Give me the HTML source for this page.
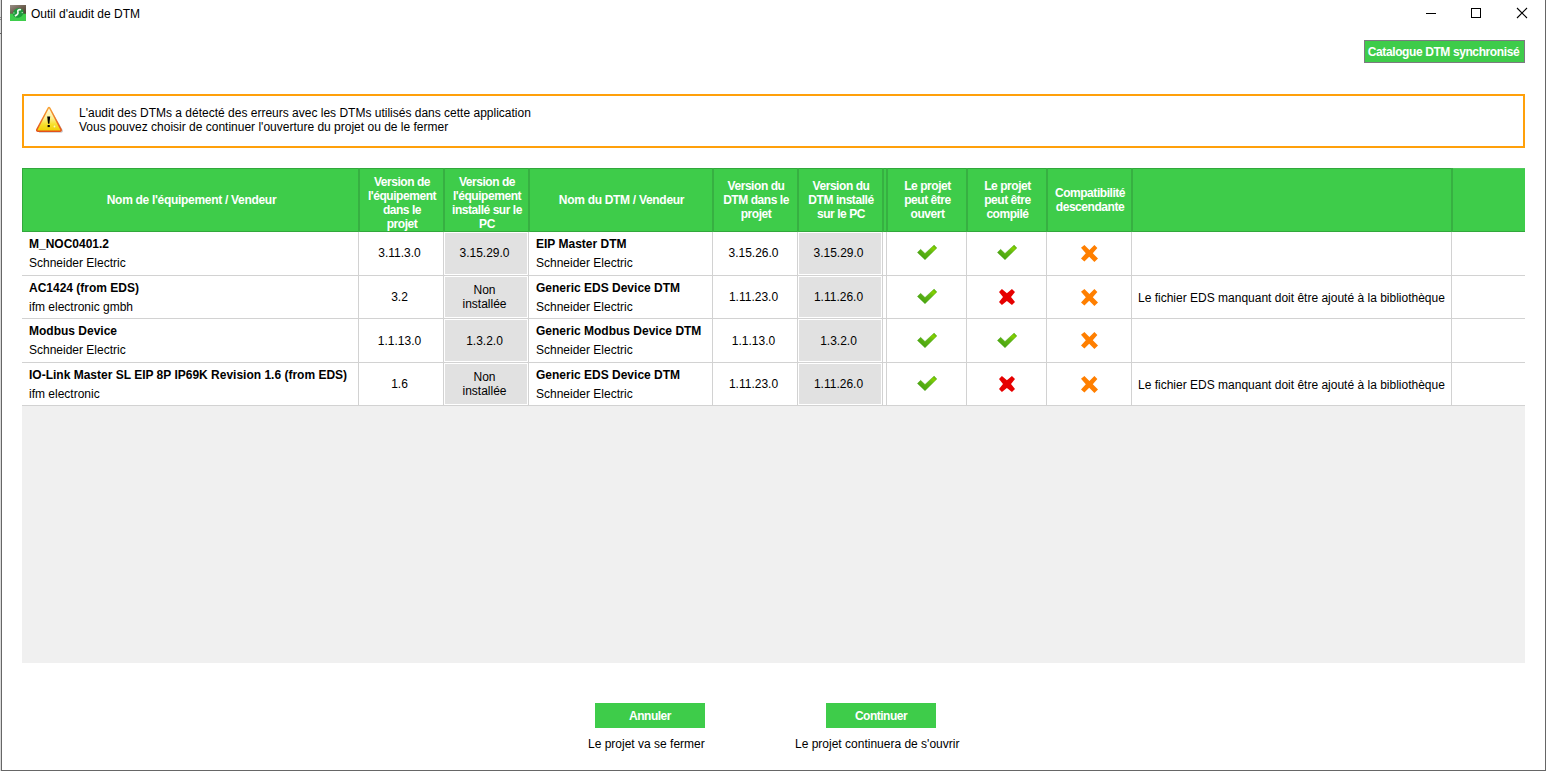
<!DOCTYPE html>
<html><head><meta charset="utf-8">
<style>
*{box-sizing:border-box;margin:0;padding:0}
html,body{width:1546px;height:771px;overflow:hidden;background:#fff}
body{position:relative;font-family:"Liberation Sans",sans-serif;font-size:12px;color:#000}
.a{position:absolute}
.hd{position:absolute;color:#fff;font-weight:bold;font-size:12px;letter-spacing:-0.45px;line-height:14px;text-align:center;white-space:nowrap}
.c{position:absolute;text-align:center;line-height:14px;white-space:nowrap}
.t{position:absolute;white-space:nowrap;line-height:14px}
</style></head><body>

<div class="a" style="left:0;top:0;width:1px;height:771px;background:#d9d9d9"></div>
<div class="a" style="left:1px;top:0;width:1px;height:771px;background:#666"></div>
<div class="a" style="left:0;top:17px;width:1px;height:1px;background:#8a8a8a"></div>
<div class="a" style="left:0;top:19px;width:1px;height:1px;background:#8a8a8a"></div>
<div class="a" style="left:0;top:33px;width:1px;height:1px;background:#606060"></div>
<div class="a" style="left:1545px;top:0;width:1px;height:771px;background:#666"></div>
<div class="a" style="left:1px;top:770px;width:1545px;height:1px;background:#666"></div>
<svg class="a" style="left:10px;top:5px" width="16" height="16" viewBox="0 0 16 16">
<defs><linearGradient id="ph" x1="0" y1="0" x2="1" y2="1"><stop offset="0" stop-color="#9a9088"/><stop offset="0.5" stop-color="#6e6050"/><stop offset="1" stop-color="#4a3c30"/></linearGradient></defs>
<rect x="0" y="0" width="16" height="9" fill="url(#ph)"/>
<rect x="0" y="8.7" width="16" height="7.3" fill="#3ecd4c"/>
<ellipse cx="8.2" cy="8" rx="5.6" ry="4.6" transform="rotate(-25 8.2 8)" fill="#1e9a3c"/>
<path d="M11 4.8 C9 4.2 7.2 5.2 7.9 7 C8.4 8.4 7.2 10.2 4.8 10.9" stroke="#eef8ee" stroke-width="1.7" fill="none"/>
<path d="M3.2 8 L4.6 8 M11.6 7.6 L13 7.6" stroke="#cfe8cf" stroke-width="0.8"/>
</svg>
<div class="a" style="left:31px;top:6px;font-size:12px;line-height:16px;white-space:nowrap">Outil d'audit de DTM</div>
<div class="a" style="left:1426px;top:13px;width:10px;height:1px;background:#000"></div>
<div class="a" style="left:1471px;top:8px;width:10px;height:10px;border:1px solid #000"></div>
<svg class="a" style="left:1516px;top:7px" width="12" height="12" viewBox="0 0 12 12"><path d="M1 1L11 11M11 1L1 11" stroke="#000" stroke-width="1.1"/></svg>
<div class="a" style="left:1364px;top:40px;width:161px;height:23px;background:#3ecc4a;border:1px solid #7c7a80;color:#fff;font-weight:bold;font-size:12px;line-height:23px;padding-right:2px;text-align:center;white-space:nowrap;letter-spacing:-0.4px">Catalogue DTM synchronisé</div>
<div class="a" style="left:22px;top:94px;width:1503px;height:54px;border:2px solid #ffa00a"></div>
<svg class="a" style="left:34px;top:105px" width="30" height="30" viewBox="0 0 30 30">
<defs><linearGradient id="wy" x1="0" y1="0" x2="0" y2="1"><stop offset="0" stop-color="#fffce8"/><stop offset="0.45" stop-color="#fdf090"/><stop offset="0.7" stop-color="#f8e030"/><stop offset="1" stop-color="#f0d000"/></linearGradient>
<linearGradient id="wb" x1="0" y1="0" x2="0" y2="1"><stop offset="0" stop-color="#f8a030"/><stop offset="1" stop-color="#e2501c"/></linearGradient></defs>
<path d="M15.6 3.6 L28.2 25.4 Q28.6 27 27 27 L5 27" fill="none" stroke="#8a8a8a" stroke-opacity="0.45" stroke-width="1.4"/>
<path d="M14.3 3 Q15 2.2 15.7 3 L27.1 24.6 Q27.5 26.2 25.9 26.2 L4 26.2 Q2.4 26.2 2.8 24.6 Z" fill="url(#wy)" stroke="url(#wb)" stroke-width="1.5" stroke-linejoin="round"/>
<path d="M13.2 11.6 L16.2 11.6 L15.4 18.8 L14 18.8 Z" fill="#000"/>
<rect x="13.6" y="20" width="2.2" height="2.1" fill="#000"/>
<circle cx="20.5" cy="21.5" r="0.9" fill="#fff" fill-opacity="0.7"/>
</svg>
<div class="t" style="left:79px;top:106px">L'audit des DTMs a détecté des erreurs avec les DTMs utilisés dans cette application<br>Vous pouvez choisir de continuer l'ouverture du projet ou de le fermer</div>
<div class="a" style="left:22px;top:168px;width:1503px;height:64px;background:#3ecc4a"></div>
<div class="a" style="left:22px;top:168px;width:1430px;height:1px;background:#32a83c"></div>
<div class="a" style="left:1452px;top:168px;width:73px;height:1px;background:#52c85c"></div>
<div class="a" style="left:22px;top:231px;width:1503px;height:1px;background:#32a83c"></div>
<div class="a" style="left:22px;top:168px;width:1px;height:64px;background:#32a83c"></div>
<div class="a" style="left:358px;top:168px;width:2px;height:64px;background:#37b042"></div>
<div class="a" style="left:443px;top:168px;width:2px;height:64px;background:#37b042"></div>
<div class="a" style="left:528px;top:168px;width:2px;height:64px;background:#37b042"></div>
<div class="a" style="left:712px;top:168px;width:2px;height:64px;background:#37b042"></div>
<div class="a" style="left:797px;top:168px;width:2px;height:64px;background:#37b042"></div>
<div class="a" style="left:882px;top:168px;width:2px;height:64px;background:#37b042"></div>
<div class="a" style="left:886px;top:168px;width:2px;height:64px;background:#37b042"></div>
<div class="a" style="left:966px;top:168px;width:2px;height:64px;background:#37b042"></div>
<div class="a" style="left:1046px;top:168px;width:2px;height:64px;background:#37b042"></div>
<div class="a" style="left:1131px;top:168px;width:2px;height:64px;background:#37b042"></div>
<div class="a" style="left:1451px;top:168px;width:2px;height:64px;background:#37b042"></div>
<div class="hd" style="left:24px;top:193px;width:335px;letter-spacing:-0.3px">Nom de l'équipement / Vendeur</div>
<div class="hd" style="left:360px;top:175px;width:84px">Version de<br>l'équipement<br>dans le<br>projet</div>
<div class="hd" style="left:445px;top:175px;width:84px">Version de<br>l'équipement<br>installé sur le<br>PC</div>
<div class="hd" style="left:530px;top:193px;width:183px;letter-spacing:-0.3px">Nom du DTM / Vendeur</div>
<div class="hd" style="left:714px;top:179px;width:84px">Version du<br>DTM dans le<br>projet</div>
<div class="hd" style="left:799px;top:179px;width:84px">Version du<br>DTM installé<br>sur le PC</div>
<div class="hd" style="left:888px;top:179px;width:79px">Le projet<br>peut être<br>ouvert</div>
<div class="hd" style="left:968px;top:179px;width:79px">Le projet<br>peut être<br>compilé</div>
<div class="hd" style="left:1048px;top:186px;width:84px">Compatibilité<br>descendante</div>
<div class="a" style="left:22px;top:275px;width:1503px;height:1px;background:#d2d2d2"></div>
<div class="a" style="left:358px;top:232px;width:1px;height:43px;background:#d2d2d2"></div>
<div class="a" style="left:443px;top:232px;width:1px;height:43px;background:#d2d2d2"></div>
<div class="a" style="left:528px;top:232px;width:1px;height:43px;background:#d2d2d2"></div>
<div class="a" style="left:712px;top:232px;width:1px;height:43px;background:#d2d2d2"></div>
<div class="a" style="left:797px;top:232px;width:1px;height:43px;background:#d2d2d2"></div>
<div class="a" style="left:882px;top:232px;width:1px;height:43px;background:#d2d2d2"></div>
<div class="a" style="left:886px;top:232px;width:1px;height:43px;background:#d2d2d2"></div>
<div class="a" style="left:966px;top:232px;width:1px;height:43px;background:#d2d2d2"></div>
<div class="a" style="left:1046px;top:232px;width:1px;height:43px;background:#d2d2d2"></div>
<div class="a" style="left:1131px;top:232px;width:1px;height:43px;background:#d2d2d2"></div>
<div class="a" style="left:1451px;top:232px;width:1px;height:43px;background:#d2d2d2"></div>
<div class="a" style="left:445px;top:233px;width:82px;height:41px;background:#e1e1e1"></div>
<div class="a" style="left:799px;top:233px;width:82px;height:41px;background:#e1e1e1"></div>
<div class="t" style="left:29px;top:237px;font-weight:bold">M_NOC0401.2</div>
<div class="t" style="left:29px;top:256px">Schneider Electric</div>
<div class="t" style="left:536px;top:237px;font-weight:bold">EIP Master DTM</div>
<div class="t" style="left:536px;top:256px">Schneider Electric</div>
<div class="c" style="left:357.5px;top:246.0px;width:84px">3.11.3.0</div>
<div class="c" style="left:442.5px;top:246.0px;width:84px">3.15.29.0</div>
<div class="c" style="left:711.5px;top:246.0px;width:84px">3.15.26.0</div>
<div class="c" style="left:796.5px;top:246.0px;width:84px">3.15.29.0</div>
<svg class="a" style="left:917px;top:244px" width="22" height="17" viewBox="0 0 22 17"><defs><linearGradient id="gk" x1="0" y1="1" x2="1" y2="0"><stop offset="0" stop-color="#3f9c0e"/><stop offset="0.6" stop-color="#62b814"/><stop offset="0.8" stop-color="#86d000"/><stop offset="1" stop-color="#4fae10"/></linearGradient></defs><path d="M0.4 8.5 L3.6 5.3 L8 9.4 L17.1 1.1 L19.9 4.0 L8 15.8 Z" fill="url(#gk)" stroke="#3c9a0c" stroke-width="0.5" stroke-opacity="0.7"/></svg>
<svg class="a" style="left:997px;top:244px" width="22" height="17" viewBox="0 0 22 17"><defs><linearGradient id="gk" x1="0" y1="1" x2="1" y2="0"><stop offset="0" stop-color="#3f9c0e"/><stop offset="0.6" stop-color="#62b814"/><stop offset="0.8" stop-color="#86d000"/><stop offset="1" stop-color="#4fae10"/></linearGradient></defs><path d="M0.4 8.5 L3.6 5.3 L8 9.4 L17.1 1.1 L19.9 4.0 L8 15.8 Z" fill="url(#gk)" stroke="#3c9a0c" stroke-width="0.5" stroke-opacity="0.7"/></svg>
<svg class="a" style="left:1080px;top:244px" width="19" height="19" viewBox="0 0 19 19"><path d="M1 3.8 L4.4 0.9 L9.4 6 L14.4 0.9 L17.35 4.1 L12.8 9.3 L18 14.5 L14.4 18 L9.2 12.7 L4.4 17.4 L1 14.5 L5.8 9.3 Z" fill="#ff7f00"/></svg>
<div class="a" style="left:22px;top:318px;width:1503px;height:1px;background:#d2d2d2"></div>
<div class="a" style="left:358px;top:276px;width:1px;height:42px;background:#d2d2d2"></div>
<div class="a" style="left:443px;top:276px;width:1px;height:42px;background:#d2d2d2"></div>
<div class="a" style="left:528px;top:276px;width:1px;height:42px;background:#d2d2d2"></div>
<div class="a" style="left:712px;top:276px;width:1px;height:42px;background:#d2d2d2"></div>
<div class="a" style="left:797px;top:276px;width:1px;height:42px;background:#d2d2d2"></div>
<div class="a" style="left:882px;top:276px;width:1px;height:42px;background:#d2d2d2"></div>
<div class="a" style="left:886px;top:276px;width:1px;height:42px;background:#d2d2d2"></div>
<div class="a" style="left:966px;top:276px;width:1px;height:42px;background:#d2d2d2"></div>
<div class="a" style="left:1046px;top:276px;width:1px;height:42px;background:#d2d2d2"></div>
<div class="a" style="left:1131px;top:276px;width:1px;height:42px;background:#d2d2d2"></div>
<div class="a" style="left:1451px;top:276px;width:1px;height:42px;background:#d2d2d2"></div>
<div class="a" style="left:445px;top:277px;width:82px;height:40px;background:#e1e1e1"></div>
<div class="a" style="left:799px;top:277px;width:82px;height:40px;background:#e1e1e1"></div>
<div class="t" style="left:29px;top:281px;font-weight:bold">AC1424 (from EDS)</div>
<div class="t" style="left:29px;top:300px">ifm electronic gmbh</div>
<div class="t" style="left:536px;top:281px;font-weight:bold">Generic EDS Device DTM</div>
<div class="t" style="left:536px;top:300px">Schneider Electric</div>
<div class="c" style="left:357.5px;top:290.0px;width:84px">3.2</div>
<div class="c" style="left:442.5px;top:283.0px;width:84px">Non<br>installée</div>
<div class="c" style="left:711.5px;top:290.0px;width:84px">1.11.23.0</div>
<div class="c" style="left:796.5px;top:290.0px;width:84px">1.11.26.0</div>
<svg class="a" style="left:917px;top:288px" width="22" height="17" viewBox="0 0 22 17"><defs><linearGradient id="gk" x1="0" y1="1" x2="1" y2="0"><stop offset="0" stop-color="#3f9c0e"/><stop offset="0.6" stop-color="#62b814"/><stop offset="0.8" stop-color="#86d000"/><stop offset="1" stop-color="#4fae10"/></linearGradient></defs><path d="M0.4 8.5 L3.6 5.3 L8 9.4 L17.1 1.1 L19.9 4.0 L8 15.8 Z" fill="url(#gk)" stroke="#3c9a0c" stroke-width="0.5" stroke-opacity="0.7"/></svg>
<svg class="a" style="left:999px;top:289px" width="17" height="17" viewBox="0 0 17 17"><path d="M0 2.9 L2.9 0 L7.9 4.2 L12.95 0 L16 2.9 L12 8.1 L16 13.1 L12.95 16 L7.9 12 L2.9 16 L0 13.1 L4 8.1 Z" fill="#e60000"/></svg>
<svg class="a" style="left:1080px;top:288px" width="19" height="19" viewBox="0 0 19 19"><path d="M1 3.8 L4.4 0.9 L9.4 6 L14.4 0.9 L17.35 4.1 L12.8 9.3 L18 14.5 L14.4 18 L9.2 12.7 L4.4 17.4 L1 14.5 L5.8 9.3 Z" fill="#ff7f00"/></svg>
<div class="t" style="left:1138px;top:291.0px">Le fichier EDS manquant doit être ajouté à la bibliothèque</div>
<div class="a" style="left:22px;top:362px;width:1503px;height:1px;background:#d2d2d2"></div>
<div class="a" style="left:358px;top:319px;width:1px;height:43px;background:#d2d2d2"></div>
<div class="a" style="left:443px;top:319px;width:1px;height:43px;background:#d2d2d2"></div>
<div class="a" style="left:528px;top:319px;width:1px;height:43px;background:#d2d2d2"></div>
<div class="a" style="left:712px;top:319px;width:1px;height:43px;background:#d2d2d2"></div>
<div class="a" style="left:797px;top:319px;width:1px;height:43px;background:#d2d2d2"></div>
<div class="a" style="left:882px;top:319px;width:1px;height:43px;background:#d2d2d2"></div>
<div class="a" style="left:886px;top:319px;width:1px;height:43px;background:#d2d2d2"></div>
<div class="a" style="left:966px;top:319px;width:1px;height:43px;background:#d2d2d2"></div>
<div class="a" style="left:1046px;top:319px;width:1px;height:43px;background:#d2d2d2"></div>
<div class="a" style="left:1131px;top:319px;width:1px;height:43px;background:#d2d2d2"></div>
<div class="a" style="left:1451px;top:319px;width:1px;height:43px;background:#d2d2d2"></div>
<div class="a" style="left:445px;top:320px;width:82px;height:41px;background:#e1e1e1"></div>
<div class="a" style="left:799px;top:320px;width:82px;height:41px;background:#e1e1e1"></div>
<div class="t" style="left:29px;top:324px;font-weight:bold">Modbus Device</div>
<div class="t" style="left:29px;top:343px">Schneider Electric</div>
<div class="t" style="left:536px;top:324px;font-weight:bold">Generic Modbus Device DTM</div>
<div class="t" style="left:536px;top:343px">Schneider Electric</div>
<div class="c" style="left:357.5px;top:334.0px;width:84px">1.1.13.0</div>
<div class="c" style="left:442.5px;top:334.0px;width:84px">1.3.2.0</div>
<div class="c" style="left:711.5px;top:334.0px;width:84px">1.1.13.0</div>
<div class="c" style="left:796.5px;top:334.0px;width:84px">1.3.2.0</div>
<svg class="a" style="left:917px;top:332px" width="22" height="17" viewBox="0 0 22 17"><defs><linearGradient id="gk" x1="0" y1="1" x2="1" y2="0"><stop offset="0" stop-color="#3f9c0e"/><stop offset="0.6" stop-color="#62b814"/><stop offset="0.8" stop-color="#86d000"/><stop offset="1" stop-color="#4fae10"/></linearGradient></defs><path d="M0.4 8.5 L3.6 5.3 L8 9.4 L17.1 1.1 L19.9 4.0 L8 15.8 Z" fill="url(#gk)" stroke="#3c9a0c" stroke-width="0.5" stroke-opacity="0.7"/></svg>
<svg class="a" style="left:997px;top:332px" width="22" height="17" viewBox="0 0 22 17"><defs><linearGradient id="gk" x1="0" y1="1" x2="1" y2="0"><stop offset="0" stop-color="#3f9c0e"/><stop offset="0.6" stop-color="#62b814"/><stop offset="0.8" stop-color="#86d000"/><stop offset="1" stop-color="#4fae10"/></linearGradient></defs><path d="M0.4 8.5 L3.6 5.3 L8 9.4 L17.1 1.1 L19.9 4.0 L8 15.8 Z" fill="url(#gk)" stroke="#3c9a0c" stroke-width="0.5" stroke-opacity="0.7"/></svg>
<svg class="a" style="left:1080px;top:331px" width="19" height="19" viewBox="0 0 19 19"><path d="M1 3.8 L4.4 0.9 L9.4 6 L14.4 0.9 L17.35 4.1 L12.8 9.3 L18 14.5 L14.4 18 L9.2 12.7 L4.4 17.4 L1 14.5 L5.8 9.3 Z" fill="#ff7f00"/></svg>
<div class="a" style="left:22px;top:405px;width:1503px;height:1px;background:#d2d2d2"></div>
<div class="a" style="left:358px;top:363px;width:1px;height:42px;background:#d2d2d2"></div>
<div class="a" style="left:443px;top:363px;width:1px;height:42px;background:#d2d2d2"></div>
<div class="a" style="left:528px;top:363px;width:1px;height:42px;background:#d2d2d2"></div>
<div class="a" style="left:712px;top:363px;width:1px;height:42px;background:#d2d2d2"></div>
<div class="a" style="left:797px;top:363px;width:1px;height:42px;background:#d2d2d2"></div>
<div class="a" style="left:882px;top:363px;width:1px;height:42px;background:#d2d2d2"></div>
<div class="a" style="left:886px;top:363px;width:1px;height:42px;background:#d2d2d2"></div>
<div class="a" style="left:966px;top:363px;width:1px;height:42px;background:#d2d2d2"></div>
<div class="a" style="left:1046px;top:363px;width:1px;height:42px;background:#d2d2d2"></div>
<div class="a" style="left:1131px;top:363px;width:1px;height:42px;background:#d2d2d2"></div>
<div class="a" style="left:1451px;top:363px;width:1px;height:42px;background:#d2d2d2"></div>
<div class="a" style="left:445px;top:364px;width:82px;height:40px;background:#e1e1e1"></div>
<div class="a" style="left:799px;top:364px;width:82px;height:40px;background:#e1e1e1"></div>
<div class="t" style="left:29px;top:368px;font-weight:bold">IO-Link Master SL EIP 8P IP69K Revision 1.6 (from EDS)</div>
<div class="t" style="left:29px;top:387px">ifm electronic</div>
<div class="t" style="left:536px;top:368px;font-weight:bold">Generic EDS Device DTM</div>
<div class="t" style="left:536px;top:387px">Schneider Electric</div>
<div class="c" style="left:357.5px;top:377.0px;width:84px">1.6</div>
<div class="c" style="left:442.5px;top:370.0px;width:84px">Non<br>installée</div>
<div class="c" style="left:711.5px;top:377.0px;width:84px">1.11.23.0</div>
<div class="c" style="left:796.5px;top:377.0px;width:84px">1.11.26.0</div>
<svg class="a" style="left:917px;top:375px" width="22" height="17" viewBox="0 0 22 17"><defs><linearGradient id="gk" x1="0" y1="1" x2="1" y2="0"><stop offset="0" stop-color="#3f9c0e"/><stop offset="0.6" stop-color="#62b814"/><stop offset="0.8" stop-color="#86d000"/><stop offset="1" stop-color="#4fae10"/></linearGradient></defs><path d="M0.4 8.5 L3.6 5.3 L8 9.4 L17.1 1.1 L19.9 4.0 L8 15.8 Z" fill="url(#gk)" stroke="#3c9a0c" stroke-width="0.5" stroke-opacity="0.7"/></svg>
<svg class="a" style="left:999px;top:376px" width="17" height="17" viewBox="0 0 17 17"><path d="M0 2.9 L2.9 0 L7.9 4.2 L12.95 0 L16 2.9 L12 8.1 L16 13.1 L12.95 16 L7.9 12 L2.9 16 L0 13.1 L4 8.1 Z" fill="#e60000"/></svg>
<svg class="a" style="left:1080px;top:375px" width="19" height="19" viewBox="0 0 19 19"><path d="M1 3.8 L4.4 0.9 L9.4 6 L14.4 0.9 L17.35 4.1 L12.8 9.3 L18 14.5 L14.4 18 L9.2 12.7 L4.4 17.4 L1 14.5 L5.8 9.3 Z" fill="#ff7f00"/></svg>
<div class="t" style="left:1138px;top:378.0px">Le fichier EDS manquant doit être ajouté à la bibliothèque</div>
<div class="a" style="left:22px;top:406px;width:1503px;height:257px;background:#f0f0f0"></div>
<div class="a" style="left:595px;top:703px;width:110px;height:25px;background:#3ecc4a;color:#fff;font-weight:bold;font-size:12px;letter-spacing:-0.5px;line-height:27px;text-align:center">Annuler</div>
<div class="a" style="left:826px;top:703px;width:110px;height:25px;background:#3ecc4a;color:#fff;font-weight:bold;font-size:12px;letter-spacing:-0.5px;line-height:27px;text-align:center">Continuer</div>
<div class="t" style="left:588px;top:737px">Le projet va se fermer</div>
<div class="t" style="left:795px;top:737px">Le projet continuera de s'ouvrir</div>
</body></html>
